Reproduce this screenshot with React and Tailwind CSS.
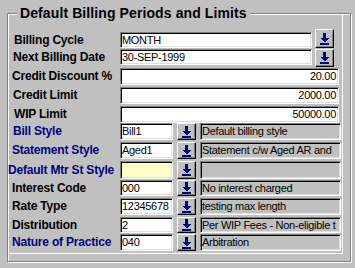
import React from 'react'

const rows = [
  { label: 'Billing Cycle', kind: 'wide', value: 'MONTH', h: 'h-[20px] pt-[3px]', ih: 'h-[16px]', lx: 'pl-[2px]' },
  { label: 'Next Billing Date', kind: 'wide', value: '30-SEP-1999', h: 'h-[19px]', ih: 'h-[16px]', lx: 'pl-[1px]' },
  { label: 'Credit Discount %', kind: 'num', value: '20.00', h: 'h-[19px]', ih: 'h-[17px]' },
  { label: 'Credit Limit', kind: 'num', value: '2000.00', h: 'h-[19px]', ih: 'h-[17px]', lx: 'pl-[1px]' },
  { label: 'WIP Limit', kind: 'num', value: '50000.00', h: 'h-[17px]', ih: 'h-[17px]', lx: 'pl-[2px]' },
  { label: 'Bill Style', kind: 'code', blue: true, value: 'Bill1', desc: 'Default billing style', h: 'h-[19px]', ih: 'h-[17px]', lx: 'pl-[1px]' },
  { label: 'Statement Style', kind: 'code', blue: true, value: 'Aged1', desc: 'Statement c/w Aged AR and', h: 'h-[19px]', ih: 'h-[17px]' },
  { label: 'Default Mtr St Style', kind: 'code', blue: true, value: '', yellow: true, desc: '', h: 'h-[19px]', ih: 'h-[18px]', lx: '-ml-[4px] w-[112px]' },
  { label: 'Interest Code', kind: 'code', value: '000', desc: 'No interest charged', h: 'h-[18px]', ih: 'h-[16px]' },
  { label: 'Rate Type', kind: 'code', value: '12345678', desc: 'testing max length', h: 'h-[19px]', ih: 'h-[17px]' },
  { label: 'Distribution', kind: 'code', value: '2', desc: 'Per WIP Fees - Non-eligible t', h: 'h-[17px]', ih: 'h-[16px]' },
  { label: 'Nature of Practice', kind: 'code', blue: true, value: '040', desc: 'Arbitration', h: 'h-[18px]', ih: 'h-[17px]' },
]

// classic win 3d sunken edit border
const sunken =
  'border border-t-[#808080] border-l-[#808080] border-r-white border-b-white shadow-[inset_1px_1px_0_#000,inset_-1px_-1px_0_#dfdfdf]'

const fieldText = 'text-[11px] tracking-[-0.3px] leading-none whitespace-nowrap overflow-hidden'

function DownArrow() {
  return (
    <svg width="9" height="12" viewBox="0 0 9 12" shapeRendering="crispEdges">
      <rect x="3" y="0" width="3" height="5" fill="#000080" />
      <polygon points="0,5 9,5 4.5,9.5" fill="#000080" />
      <rect x="0" y="10" width="9" height="2" fill="#000080" />
    </svg>
  )
}

function DropButton({ size }) {
  return (
    <div
      className={`${size} shrink-0 flex items-center justify-center bg-[#c0c0c0] border border-t-white border-l-white border-r-black border-b-black shadow-[inset_-1px_-1px_0_#808080]`}
    >
      <DownArrow />
    </div>
  )
}

function Row({ row }) {
  const ih = row.ih
  const lh = ih === 'h-[16px]' ? 'leading-[16px]' : ih === 'h-[18px]' ? 'leading-[18px]' : 'leading-[17px]'
  return (
    <div className={`flex items-start ${row.h}`}>
      <div
        className={`shrink-0 ${row.lx && row.lx.includes('w-[112px]') ? '' : 'w-[108px]'} ${row.lx || ''} ${lh} whitespace-nowrap font-bold text-[12px] tracking-[-0.2px] ${
          row.blue ? 'text-[#000080]' : 'text-black'
        }`}
      >
        {row.label}
      </div>

      {row.kind === 'wide' && (
        <>
          <div className={`w-[192px] shrink-0 ${ih} bg-white ${sunken} flex items-center pl-[1px] ${fieldText}`}>
            {row.value}
          </div>
          <div className={`ml-[3px] ${row.label === 'Billing Cycle' ? '-mt-[3px]' : ''}`}>
            <DropButton size={row.label === 'Billing Cycle' ? 'w-[19px] h-[19px]' : 'w-[19px] h-[18px]'} />
          </div>
        </>
      )}

      {row.kind === 'num' && (
        <div className={`w-[219px] shrink-0 ${ih} bg-white ${sunken} flex items-center justify-end pr-[2px] ${fieldText}`}>
          {row.value}
        </div>
      )}

      {row.kind === 'code' && (
        <>
          <div
            className={`w-[53px] shrink-0 ${ih} ${row.yellow ? 'bg-[#ffffc8]' : 'bg-white'} ${sunken} flex items-center pl-[1px] ${fieldText}`}
          >
            {row.value}
          </div>
          <div className="ml-[4px]">
            <DropButton size={`w-[19px] ${ih}`} />
          </div>
          <div className={`ml-[4px] w-[141px] shrink-0 ${ih} bg-[#c0c0c0] ${sunken} flex items-center pl-[1px] ${fieldText}`}>
            {row.desc}
          </div>
        </>
      )}
    </div>
  )
}

export default function App() {
  return (
    <div
      className="w-[355px] h-[268px] bg-[#c0c0c0] overflow-hidden pt-[13px] pl-[7px]"
      style={{ fontFamily: '"Liberation Sans", Arial, sans-serif' }}
    >
      <div className="relative w-[344px] h-[249px] border border-[#808080] shadow-[inset_1px_1px_0_#fff,1px_1px_0_#fff]">
        <span className="absolute left-[9px] -top-[9px] px-[3px] bg-[#c0c0c0] text-[14px] leading-[16px] tracking-[0.1px] font-bold text-black whitespace-nowrap">
          Default Billing Periods and Limits
        </span>
        <div className="w-[335px] h-[240px] border-r border-b border-white pt-[15px] pl-[4px] text-black">
          {rows.map((r) => (
            <Row key={r.label} row={r} />
          ))}
        </div>
      </div>
    </div>
  )
}
